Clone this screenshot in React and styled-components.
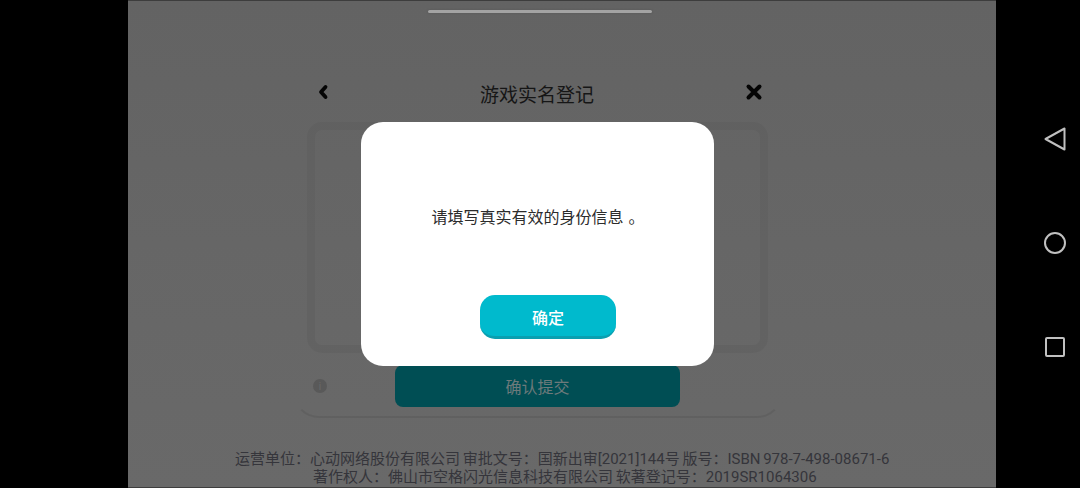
import React from 'react';
import styled, { createGlobalStyle } from 'styled-components';

const GlobalStyle = createGlobalStyle`
  html, body {
    margin: 0;
    padding: 0;
    background: #000;
  }
  body {
    font-family: Roboto, "Noto Sans CJK SC", sans-serif;
  }
`;

const Screen = styled.div`
  display: flex;
  width: 1080px;
  height: 488px;
  overflow: hidden;
  background: #000;
`;

const LeftBar = styled.div`
  width: 128px;
  flex-shrink: 0;
`;

const Stage = styled.div`
  position: relative;
  width: 868px;
  height: 488px;
  flex-shrink: 0;
  box-sizing: border-box;
  display: flex;
  flex-direction: column;
  align-items: flex-start;
  padding-top: 1px;
  background: linear-gradient(#636363, #696969);
  border-top: 1px solid #3d3d3d;
  border-bottom: 1px solid #3d3d3d;
`;

const Handle = styled.div`
  width: 224px;
  height: 3px;
  margin: 8px 0 0 300px;
  border-radius: 2px;
  background: #a3a3a3;
  box-shadow: 0 0 2px #555;
`;

const Card = styled.div`
  box-sizing: border-box;
  width: 490px;
  height: 348px;
  margin: 57px 0 0 165px;
  padding: 0 12px;
  display: flex;
  flex-direction: column;
  border: 2px solid transparent;
  border-bottom-color: rgba(0, 0, 0, 0.07);
  border-radius: 26px;
`;

const CardHeader = styled.div`
  display: flex;
  align-items: center;
  justify-content: space-between;
  height: 50px;
  padding: 0 6px 0 7px;
`;

const IconButton = styled.div`
  display: flex;
  width: 18px;
  height: 18px;
  align-items: center;
  justify-content: center;
  margin-top: -10px;
`;

const CardTitle = styled.div`
  font-size: 19px;
  line-height: 26px;
  color: #161616;
  margin: -2px 3px 0 0;
`;

const FormPanel = styled.div`
  box-sizing: border-box;
  width: 461px;
  height: 231px;
  border: 8px solid rgba(0, 0, 0, 0.04);
  border-radius: 15px;
`;

const SubmitRow = styled.div`
  display: flex;
  align-items: center;
  height: 42px;
  margin-top: 12px;
`;

const InfoDot = styled.div`
  width: 14px;
  height: 14px;
  margin-left: 6px;
  border-radius: 50%;
  background: #595959;
  display: flex;
  align-items: center;
  justify-content: center;
  font-size: 10px;
  color: #696969;
`;

const SubmitButton = styled.div`
  width: 285px;
  height: 42px;
  margin-left: 68px;
  border-radius: 8px;
  background: #004e54;
  color: #6d7a7b;
  font-size: 16px;
  display: flex;
  align-items: center;
  justify-content: center;
`;

const Footer = styled.div`
  margin: 32px 0 0 0;
  width: 868px;
  font-size: 15px;
  line-height: 18px;
  color: #35353b;
  white-space: nowrap;
  word-spacing: -1px;
`;

const FooterLine = styled.div`
  padding-left: ${props => props.$indent}px;
`;

const Modal = styled.div`
  position: absolute;
  left: 233px;
  top: 121px;
  box-sizing: border-box;
  width: 353px;
  height: 244px;
  padding-top: 84px;
  border-radius: 22px;
  background: #fff;
  display: flex;
  flex-direction: column;
  align-items: center;
`;

const Message = styled.div`
  font-size: 16px;
  line-height: 24px;
  color: #2c2c2c;
  white-space: nowrap;
  margin-left: 1px;
`;

const Stop = styled.span`
  margin-left: 5px;
`;

const OkButton = styled.div`
  box-sizing: border-box;
  width: 136px;
  height: 44px;
  margin: 65px 0 0 21px;
  padding-top: 3px;
  border-radius: 15px;
  background: #00bacd;
  border-bottom: 3px solid #0a9fb0;
  color: #fff;
  font-size: 16px;
  font-weight: 500;
  display: flex;
  align-items: center;
  justify-content: center;
`;

const NavRail = styled.div`
  width: 84px;
  flex-shrink: 0;
  display: flex;
  flex-direction: column;
  align-items: center;
  padding: 124px 0 0 34px;
  box-sizing: border-box;
  gap: 74px;
`;

const NavIcon = styled.svg`
  width: 30px;
  height: 30px;
  display: block;
  fill: none;
  stroke: #c0c0c0;
  stroke-width: 2;
`;

export default function App() {
  return (
    <Screen>
      <GlobalStyle />
      <LeftBar />
      <Stage>
        <Handle />
        <Card>
          <CardHeader>
            <IconButton>
              <svg width="12" height="16" viewBox="0 0 12 16">
                <path d="M8.5 3 L4 8 L8.5 13" fill="none" stroke="#050505" strokeWidth="3.8" strokeLinecap="round" strokeLinejoin="round" />
              </svg>
            </IconButton>
            <CardTitle>游戏实名登记</CardTitle>
            <IconButton>
              <svg width="18" height="18" viewBox="0 0 18 18">
                <path d="M3.5 3.5 L14.5 14.5 M14.5 3.5 L3.5 14.5" fill="none" stroke="#050505" strokeWidth="4" strokeLinecap="round" />
              </svg>
            </IconButton>
          </CardHeader>
          <FormPanel />
          <SubmitRow>
            <InfoDot>i</InfoDot>
            <SubmitButton>确认提交</SubmitButton>
          </SubmitRow>
        </Card>
        <Footer>
          <FooterLine $indent={107}>运营单位：心动网络股份有限公司 审批文号：国新出审[2021]144号 版号：ISBN 978-7-498-08671-6</FooterLine>
          <FooterLine $indent={185}>著作权人：佛山市空格闪光信息科技有限公司 软著登记号：2019SR1064306</FooterLine>
        </Footer>
        <Modal>
          <Message>请填写真实有效的身份信息<Stop>。</Stop></Message>
          <OkButton>确定</OkButton>
        </Modal>
      </Stage>
      <NavRail>
        <NavIcon viewBox="0 0 30 30">
          <path d="M24.5 4.5 V25.5 L5.5 15 Z" strokeLinejoin="round" />
        </NavIcon>
        <NavIcon viewBox="0 0 30 30">
          <circle cx="15" cy="15" r="10" />
        </NavIcon>
        <NavIcon viewBox="0 0 30 30">
          <rect x="6" y="6" width="18" height="18" rx="1" />
        </NavIcon>
      </NavRail>
    </Screen>
  );
}
